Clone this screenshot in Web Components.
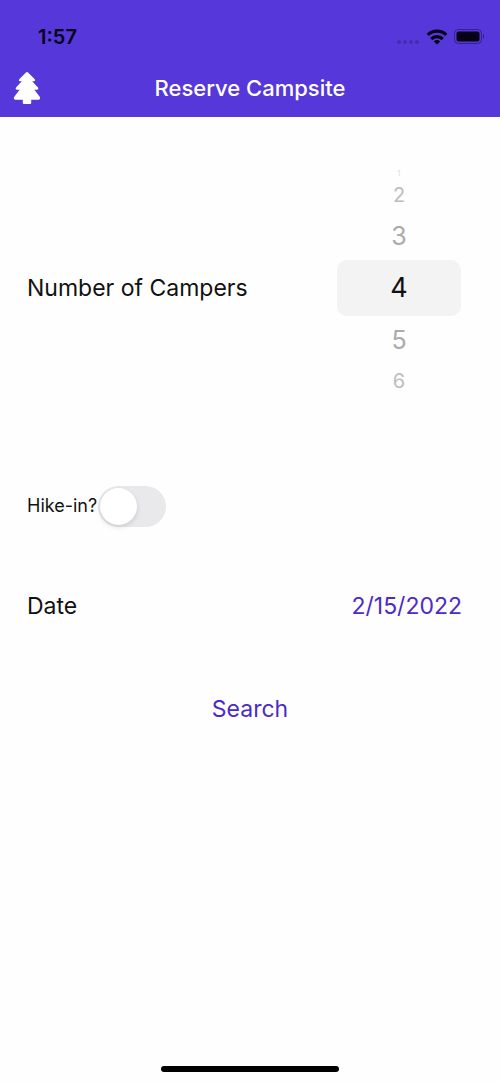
<!DOCTYPE html>
<html lang="en">
<head>
<meta charset="utf-8">
<meta name="viewport" content="width=device-width, initial-scale=1">
<title>Reserve Campsite</title>
<style>
  body { margin: 0; background: #fefefe; color: #111; font-family: Inter, "Liberation Sans", sans-serif; }
</style>
</head>
<body>
<reserve-screen></reserve-screen>
<script>
const define = (name, html, ready) => {
  const template = document.createElement('template');
  template.innerHTML = html;
  customElements.define(name, class extends HTMLElement {
    connectedCallback() {
      if (this.shadowRoot) return;
      this.attachShadow({ mode: 'open' }).append(template.content.cloneNode(true));
      if (ready) ready(this, this.shadowRoot);
    }
  });
};

define('status-bar', `
  <style>
    :host { display: flex; align-items: center; justify-content: space-between; height: 58px; padding: 15px 16px 0 38px; box-sizing: border-box; color: #080016; }
    time { font-size: 20px; font-weight: 600; line-height: 24px; }
    svg { display: block; width: 88px; height: 20px; }
  </style>
  <time>1:57</time>
  <svg viewBox="0 0 88 20" role="img" aria-label="Wi-Fi on, battery full">
    <g fill="currentColor" opacity=".2"><circle cx="3" cy="15" r="2"/><circle cx="9" cy="15" r="2"/><circle cx="15" cy="15" r="2"/><circle cx="21" cy="15" r="2"/></g>
    <g fill="none" stroke="currentColor" stroke-width="3.2"><path d="M31.8 7.8a13.2 13.2 0 0 1 18.4 0"/><path d="M35.2 12a8.4 8.4 0 0 1 11.6 0"/></g>
    <path d="M41 17.6l-3.2-3.2a4.7 4.7 0 0 1 6.4 0z" fill="currentColor"/>
    <rect x="58.5" y="2.5" width="27" height="14" rx="4" fill="none" stroke="currentColor" stroke-opacity=".4"/>
    <rect x="60.5" y="4.5" width="23" height="10" rx="2" fill="currentColor"/>
    <path d="M87 7.2a2.5 2.5 0 0 1 0 4.6z" fill="currentColor" opacity=".45"/>
  </svg>`);

define('nav-bar', `
  <style>
    :host { display: grid; grid-template-columns: 1fr auto 1fr; align-items: center; height: 59px; padding: 0 13px; box-sizing: border-box; color: #fff; }
    button { justify-self: start; display: block; padding: 0; border: 0; background: none; color: inherit; }
    svg { display: block; width: 28px; height: 34px; }
    h1 { margin: 0; font-size: 22px; line-height: 28px; font-weight: 500; }
  </style>
  <button type="button" aria-label="Menu">
    <svg viewBox="0 0 28 34" fill="currentColor" aria-hidden="true">
      <path d="M14 1 Q14.7 1 15.3 1.7 L21.8 8.2 Q22.8 10 21 10.2 H19.2 L25 16.5 Q26 18.6 24 18.8 H21.4 L26.9 26 Q27.8 28.6 25.4 28.8 H18.2 V32 Q18.2 33 17.2 33 H10.8 Q9.8 33 9.8 32 V28.8 H2.6 Q.2 28.6 1.1 26 L6.6 18.8 H4 Q2 18.6 3 16.5 L8.8 10.2 H7 Q5.2 10 6.2 8.2 L12.7 1.7 Q13.3 1 14 1z"/>
    </svg>
  </button>
  <h1><slot></slot></h1>`);

define('form-row', `
  <style>
    :host { display: flex; align-items: center; justify-content: space-between; min-height: 100px; padding: 0 38px 0 27px; font-size: 23px; line-height: 28px; }
    :host([tall]) { padding: 51px 39px 48px 27px; }
    :host([center]) { justify-content: center; min-height: 106px; padding: 0 27px; }
  </style>
  <slot></slot>`);

define('number-wheel', `
  <style>
    :host { display: block; width: 124px; }
    fieldset { display: grid; grid-template-rows: 10px 34px 48px 56px 48px 34px 10px; margin: 0; padding: 0; border: 0; min-width: 0; }
    label { display: grid; place-items: center; position: relative; overflow: hidden; border-radius: 10px; color: #ababab; font-size: 25px; line-height: 32px; }
    input { appearance: none; position: absolute; inset: 0; margin: 0; }
    label.far { font-size: 20px; line-height: 24px; color: #bdbdbd; }
    label.edge { font-size: 8px; line-height: 10px; color: #dedede; }
    label:has(input:checked) { background: #f3f3f3; color: #111; font-size: 27px; }
  </style>
  <fieldset aria-label="Number of Campers"></fieldset>`, (host, root) => {
  const kinds = ['edge', 'far', '', '', '', 'far'];
  root.querySelector('fieldset').innerHTML = kinds.map((kind, i) =>
    `<label class="${kind}"><input type="radio" name="campers" value="${i + 1}"${i === 3 ? ' checked' : ''}>${i + 1}</label>`).join('');
});

define('toggle-switch', `
  <style>
    :host { display: block; }
    label { display: flex; align-items: center; gap: 1px; font-size: 18px; line-height: 24px; }
    input { appearance: none; display: flex; align-items: center; width: 68px; height: 41px; margin: 0; padding: 2px; box-sizing: border-box; border-radius: 21px; background: #e9e9eb; }
    input::before { content: ""; width: 37px; height: 37px; border-radius: 50%; background: #fff; box-shadow: 0 2px 5px #0002; }
    input:checked { background: #5637d9; justify-content: flex-end; }
  </style>
  <label><slot></slot><input type="checkbox" role="switch"></label>`);

define('text-button', `
  <style>
    :host { display: block; }
    button { display: block; padding: 0; border: 0; background: none; color: #4a2bc9; font: inherit; }
  </style>
  <button type="button"><slot></slot></button>`);

define('reserve-screen', `
  <style>
    :host { display: flex; flex-direction: column; min-height: 100vh; }
    header { background: #5637d9; }
    main { flex: 1; }
    footer { display: flex; justify-content: center; padding-bottom: 11px; }
    footer span { width: 178px; height: 6px; border-radius: 3px; background: #000; }
  </style>
  <header><status-bar></status-bar><nav-bar>Reserve Campsite</nav-bar></header>
  <main>
    <form-row tall><span>Number of Campers</span><number-wheel></number-wheel></form-row>
    <form-row><toggle-switch>Hike-in?</toggle-switch></form-row>
    <form-row><span>Date</span><text-button>2/15/2022</text-button></form-row>
    <form-row center><text-button>Search</text-button></form-row>
  </main>
  <footer><span></span></footer>`);
</script>
</body>
</html>
